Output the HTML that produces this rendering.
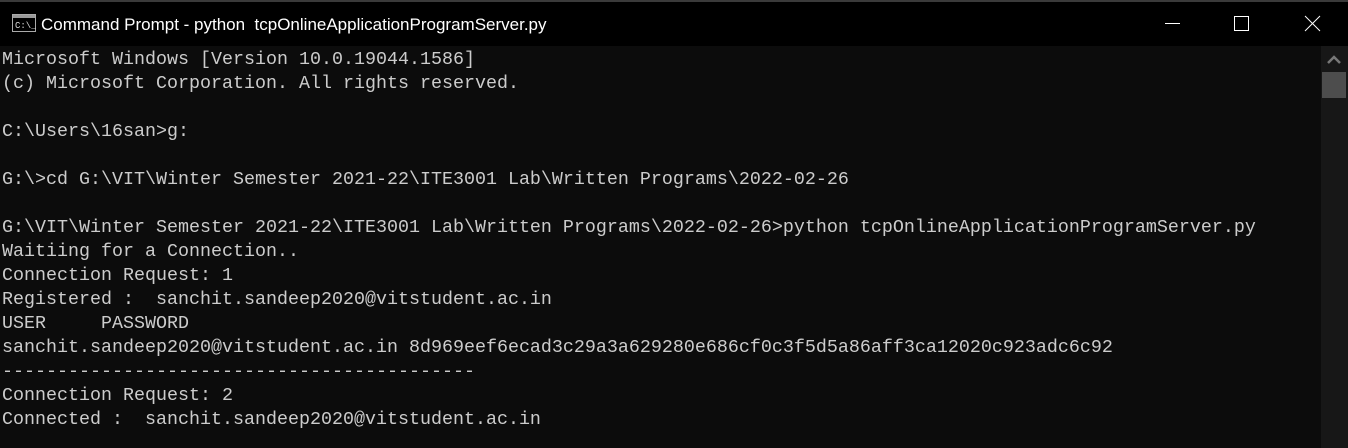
<!DOCTYPE html>
<html><head><style>
html,body{margin:0;padding:0;width:1348px;height:448px;overflow:hidden;background:#0c0c0c}
.top{position:absolute;left:0;top:0;width:1348px;height:2px;background:#3a3a3a}
.tb{position:absolute;left:0;top:2px;width:1348px;height:44px;background:#000}
.title{position:absolute;left:41px;top:15px;color:#fff;font:17px "Liberation Sans",sans-serif;white-space:pre}
.con{position:absolute;left:2px;top:48px;color:#cccccc;font:18.33px/24px "Liberation Mono",monospace;white-space:pre}
.sb{position:absolute;left:1321px;top:46px;width:27px;height:402px;background:#171717}
.th{position:absolute;left:1322px;top:72px;width:24px;height:26px;background:#4d4d4d}
</style></head><body>
<div class="top"></div>
<div class="tb"></div>
<svg style="position:absolute;left:12px;top:14px" width="24" height="20" viewBox="0 0 24 20">
<rect x="0.5" y="0.5" width="23" height="17" fill="#000" stroke="#aaa"/>
<rect x="1" y="1" width="22" height="3" fill="#999"/>
<text x="3" y="14" fill="#ddd" font-size="9" font-family="Liberation Mono">C:\_</text>
</svg>
<div class="title">Command Prompt - python  tcpOnlineApplicationProgramServer.py</div>
<svg style="position:absolute;left:1160px;top:10px" width="180" height="30">
<line x1="5" y1="13.5" x2="20" y2="13.5" stroke="#fff" stroke-width="1"/>
<rect x="74.5" y="6.5" width="14" height="14" fill="none" stroke="#fff" stroke-width="1"/>
<line x1="145" y1="6" x2="160" y2="21" stroke="#fff" stroke-width="1"/>
<line x1="160" y1="6" x2="145" y2="21" stroke="#fff" stroke-width="1"/>
</svg>
<div class="con">Microsoft Windows [Version 10.0.19044.1586]
(c) Microsoft Corporation. All rights reserved.

C:\Users\16san>g:

G:\>cd G:\VIT\Winter Semester 2021-22\ITE3001 Lab\Written Programs\2022-02-26

G:\VIT\Winter Semester 2021-22\ITE3001 Lab\Written Programs\2022-02-26>python tcpOnlineApplicationProgramServer.py
Waitiing for a Connection..
Connection Request: 1
Registered :  sanchit.sandeep2020@vitstudent.ac.in
USER     PASSWORD
sanchit.sandeep2020@vitstudent.ac.in 8d969eef6ecad3c29a3a629280e686cf0c3f5d5a86aff3ca12020c923adc6c92
-------------------------------------------
Connection Request: 2
Connected :  sanchit.sandeep2020@vitstudent.ac.in</div>
<div class="sb"></div>
<svg style="position:absolute;left:1326px;top:54px" width="16" height="12"><polyline points="2,9 8,3 14,9" fill="none" stroke="#777" stroke-width="2.5"/></svg>
<div class="th"></div>
</body></html>
